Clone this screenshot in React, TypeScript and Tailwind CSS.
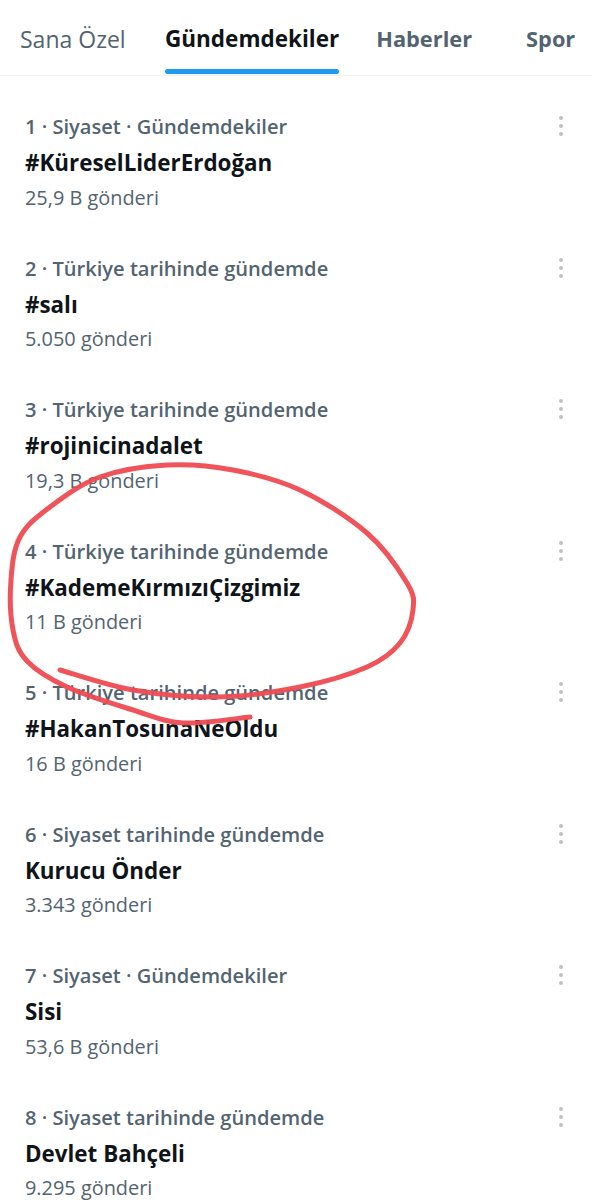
import React from 'react';

const font = { fontFamily: '"Open Sans", "Noto Sans", Arial, sans-serif' };

const trends = [
  { meta: '1 · Siyaset · Gündemdekiler', title: '#KüreselLiderErdoğan', count: '25,9 B gönderi' },
  { meta: '2 · Türkiye tarihinde gündemde', title: '#salı', count: '5.050 gönderi' },
  { meta: '3 · Türkiye tarihinde gündemde', title: '#rojinicinadalet', count: '19,3 B gönderi' },
  { meta: '4 · Türkiye tarihinde gündemde', title: '#KademeKırmızıÇizgimiz', count: '11 B gönderi' },
  { meta: '5 · Türkiye tarihinde gündemde', title: '#HakanTosunaNeOldu', count: '16 B gönderi' },
  { meta: '6 · Siyaset tarihinde gündemde', title: 'Kurucu Önder', count: '3.343 gönderi' },
  { meta: '7 · Siyaset · Gündemdekiler', title: 'Sisi', count: '53,6 B gönderi' },
  { meta: '8 · Siyaset tarihinde gündemde', title: 'Devlet Bahçeli', count: '9.295 gönderi' },
];

// hand drawn circle, traced point by point
const scribble: [number, number][] = [
  [60, 670], [133, 690], [217, 697], [300, 687], [367, 667], [400, 643], [413, 610],
  [407, 583], [367, 533], [300, 490], [233, 470], [167, 465], [100, 477], [50, 507],
  [20, 537], [11, 580], [13, 630], [27, 661], [67, 687], [133, 710], [183, 723], [250, 717],
];

function smoothPath(pts: [number, number][]) {
  let d = `M${pts[0][0]},${pts[0][1]}`;
  for (let i = 0; i < pts.length - 1; i++) {
    const p0 = pts[i - 1] || pts[i];
    const p1 = pts[i];
    const p2 = pts[i + 1];
    const p3 = pts[i + 2] || p2;
    const c1x = p1[0] + (p2[0] - p0[0]) / 6;
    const c1y = p1[1] + (p2[1] - p0[1]) / 6;
    const c2x = p2[0] - (p3[0] - p1[0]) / 6;
    const c2y = p2[1] - (p3[1] - p1[1]) / 6;
    d += ` C${c1x},${c1y} ${c2x},${c2y} ${p2[0]},${p2[1]}`;
  }
  return d;
}

function Dots() {
  return (
    <div className="flex flex-col gap-[4px] items-center pt-[1px]">
      <span className="w-[4px] h-[4px] rounded-full bg-[#bcc2c6]" />
      <span className="w-[4px] h-[4px] rounded-full bg-[#bcc2c6]" />
      <span className="w-[4px] h-[4px] rounded-full bg-[#bcc2c6]" />
    </div>
  );
}

export default function App() {
  return (
    <div className="relative w-[592px] h-[1200px] bg-white overflow-hidden" style={font}>
      <div className="flex items-end h-[76px] border-b border-[#eff3f4] text-[22.5px] leading-[28px] whitespace-nowrap">
        <div className="w-[165px] shrink-0 pl-[20px] pb-[22px] text-[#536471] text-[23px]">Sana Özel</div>
        <div className="flex flex-col items-center shrink-0">
          <span className="font-bold text-[#0f1419]">Gündemdekiler</span>
          <span className="mt-[16px] h-[5px] w-full rounded-full bg-[#1d9bf0]" />
          <span className="h-[1px]" />
        </div>
        <div className="pl-[37px] pb-[22px] font-bold text-[#536471] shrink-0 text-[21.8px]">Haberler</div>
        <div className="pl-[54px] pb-[22px] font-bold text-[#536471] shrink-0 text-[21.8px]">Spor</div>
      </div>

      <div className="pt-[16px]">
        {trends.map((t) => (
          <div key={t.meta} className="flex justify-between pl-[25px] pr-[29px] pt-[23px] pb-[24px]">
            <div className="flex flex-col whitespace-nowrap">
              <span className="text-[20.1px] leading-[24px] font-semibold text-[#536471]">{t.meta}</span>
              <span className="mt-[8px] text-[22.4px] leading-[32px] font-bold text-[#0f1419]">{t.title}</span>
              <span className="mt-[6.5px] text-[19.9px] leading-[24px] text-[#536471]">{t.count}</span>
            </div>
            <Dots />
          </div>
        ))}
      </div>

      <svg className="absolute inset-0 pointer-events-none" width="592" height="1200" viewBox="0 0 592 1200">
        <path d={smoothPath(scribble)} fill="none" stroke="#ee4b52" strokeWidth="5" strokeLinecap="round" strokeLinejoin="round" opacity="0.95" />
      </svg>
    </div>
  );
}
